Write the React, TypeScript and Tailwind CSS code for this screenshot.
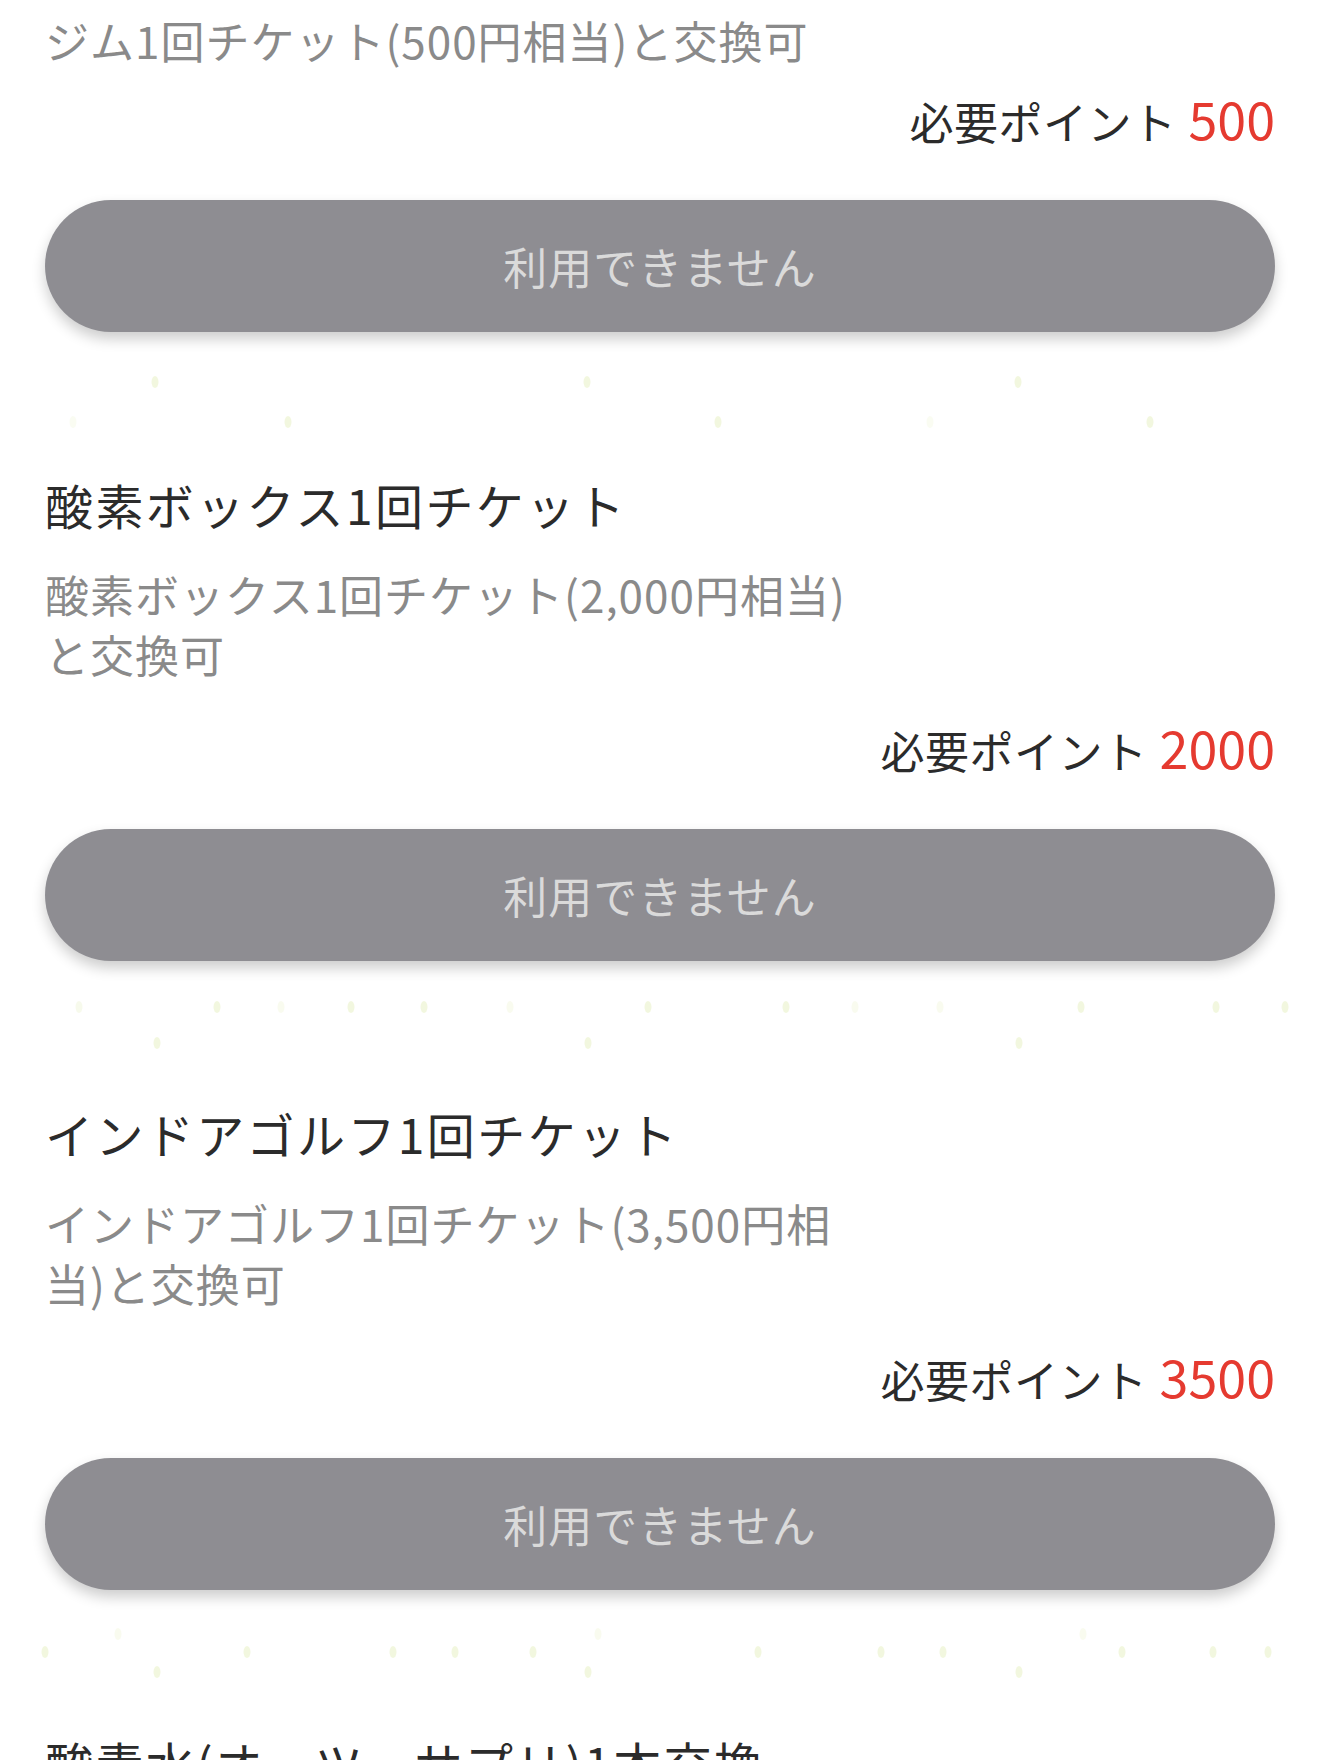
import React from "react";

type Dot = [number, number, number?];

type Item = {
  title?: string;
  desc: string;
  points: number;
  dots: Dot[];
};

const items: Item[] = [
  {
    desc: "ジム1回チケット(500円相当)と交換可",
    points: 500,
    dots: [
      [155, 50], [587, 50], [1018, 50],
      [73, 90, 0.4], [288, 90], [718, 90], [1150, 90], [930, 90, 0.4],
    ],
  },
  {
    title: "酸素ボックス1回チケット",
    desc: "酸素ボックス1回チケット(2,000円相当)と交換可",
    points: 2000,
    dots: [
      [79, 46, 0.6], [217, 46], [281, 46, 0.5], [351, 46], [424, 46],
      [510, 46, 0.5], [648, 46], [786, 46], [855, 46, 0.5], [940, 46, 0.5],
      [1081, 46], [1216, 46], [1285, 46],
      [157, 82], [588, 82], [1019, 82],
    ],
  },
  {
    title: "インドアゴルフ1回チケット",
    desc: "インドアゴルフ1回チケット(3,500円相当)と交換可",
    points: 3500,
    dots: [
      [118, 44, 0.5], [598, 44, 0.5], [1083, 44, 0.5],
      [45, 62], [247, 62], [393, 62], [455, 62], [533, 62], [758, 62],
      [881, 62], [943, 62], [1122, 62], [1213, 62], [1268, 62],
      [157, 82], [588, 82], [1019, 82],
    ],
  },
  {
    title: "酸素水(オーツーサプリ)1本交換",
    desc: "酸素水(オーツーサプリ)1本と交換可",
    points: 300,
    dots: [],
  },
];

const font = { fontFamily: '"Noto Sans CJK JP", "Noto Sans", sans-serif' };

function Dots({ dots }: { dots: Dot[] }) {
  return (
    <svg width="1320" height="138" viewBox="0 0 1320 138" className="block">
      {dots.map(([x, y, o], i) => (
        <ellipse
          key={i}
          cx={x}
          cy={y}
          rx={3.5}
          ry={6}
          fill="#eef4d4"
          opacity={(o ?? 1) * 0.75}
        />
      ))}
    </svg>
  );
}

function Card({ item, first }: { item: Item; first?: boolean }) {
  return (
    <div className="bg-white">
      <div className={first ? "px-[45px] pt-[10px]" : "px-[45px]"}>
        {item.title && (
          <h2 className="text-[48px] leading-[68px] tracking-[0.05em] text-[#2b2b2b]">
            {item.title}
          </h2>
        )}
        <p
          className={
            (first ? "" : "mt-[26px] ") +
            "w-[810px] text-[44px] leading-[60px] tracking-[1px] text-[#8a8a8a]"
          }
        >
          {item.desc}
        </p>
        <div
          className={
            (first ? "mt-[18px] " : "mt-[33px] ") +
            "flex h-[60px] items-baseline justify-end leading-[60px]"
          }
        >
          <span className="text-[44px] tracking-[0.5px] text-[#2b2b2b]">
            必要ポイント
          </span>
          <span className="ml-[12px] text-[52px] text-[#e53a30]">
            {item.points}
          </span>
        </div>
        <button
          disabled
          className="mt-[52px] flex h-[132px] w-full items-center justify-center rounded-full bg-[#8e8d92] text-[44px] tracking-[1px] text-[#dadada] shadow-[0_7px_14px_rgba(0,0,0,0.2)]"
        >
          利用できません
        </button>
      </div>
      <Dots dots={item.dots} />
    </div>
  );
}

export default function App() {
  return (
    <div className="h-[1760px] w-[1320px] overflow-hidden bg-white" style={font}>
      {items.map((item, i) => (
        <Card key={i} item={item} first={i === 0} />
      ))}
    </div>
  );
}
